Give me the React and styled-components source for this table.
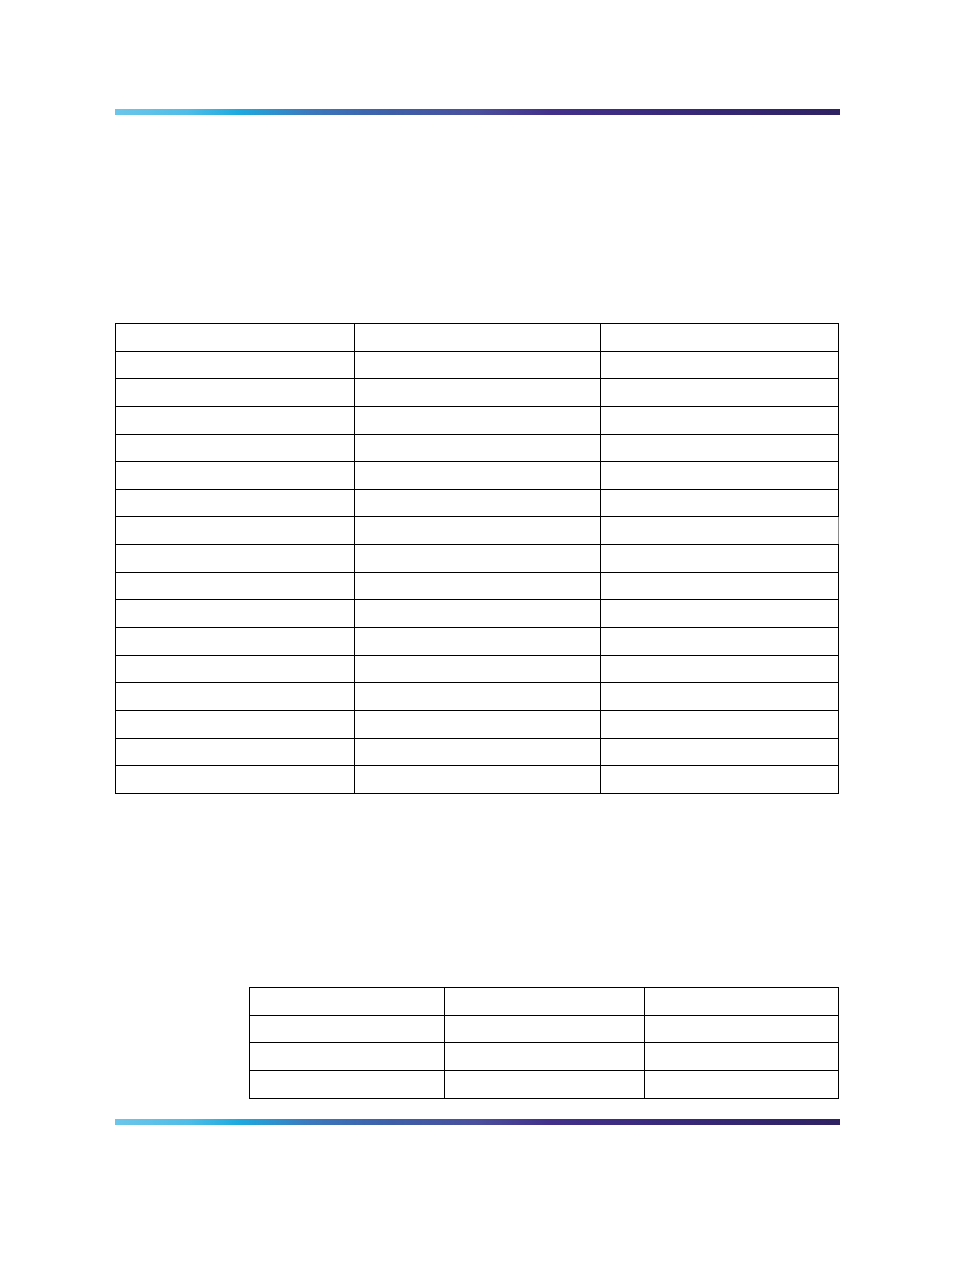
import React from 'react'
import styled, { createGlobalStyle } from 'styled-components'

const GlobalStyle = createGlobalStyle`
body {
  margin: 0;
  background: #ffffff;
  font-family: "Liberation Sans", Arial, sans-serif;
}
`;

const Page = styled.div`
width: 954px;
height: 1272px;
box-sizing: border-box;
padding: 109px 0 0 115px;
display: flex;
flex-direction: column;
`;

const Band = styled.div`
width: 725px;
height: 6px;
margin-top: ${p => p.$top || 0}px;
background: linear-gradient(90deg, #6cc6ea 0%, #4fbde8 10%, #1eaadf 17%, #3b78bd 27%, #3d5fa8 38%, #4a4f9c 50%, #42308a 60%, #3a2a7c 75%, #2f2262 100%);
`;

const Grid = styled.table`
border-collapse: collapse;
table-layout: fixed;
width: ${p => p.$width}px;
margin-top: ${p => p.$top}px;
margin-left: ${p => p.$left || 0}px;
`;

const Cell = styled.td`
border: 1px solid #000;
border-left-color: ${p => (p.$soft ? '#8a8a8a' : '#000')};
border-right-color: ${p => (p.$softEnd ? '#8a8a8a' : '#000')};
height: ${p => p.$h}px;
padding: 0;
box-sizing: border-box;
`;

const mainCols = [239, 246, 238];
const smallCols = [195, 200, 194];

const Table = ({ rows, cols, width, top, left, h, softRow }) => (
  <Grid $width={width} $top={top} $left={left}>
    <colgroup>
      {cols.map((w, i) => <col key={i} style={{ width: w }} />)}
    </colgroup>
    <tbody>
      {Array.from({ length: rows }).map((_, r) => (
        <tr key={r}>
          {cols.map((_, c) => (
            <Cell
              key={c}
              $h={h}
              $soft={r === softRow && c > 0}
              $softEnd={r === softRow && c === cols.length - 1}
            />
          ))}
        </tr>
      ))}
    </tbody>
  </Grid>
)

const App = () => {
  return (
    <>
      <GlobalStyle />
      <Page>
        <Band />
        <Table rows={17} cols={mainCols} width={723} top={208} h={27.65} softRow={7} />
        <Table rows={4} cols={smallCols} width={589} top={193} left={134} h={27.75} />
        <Band $top={20} />
      </Page>
    </>
  )
}

export default App
